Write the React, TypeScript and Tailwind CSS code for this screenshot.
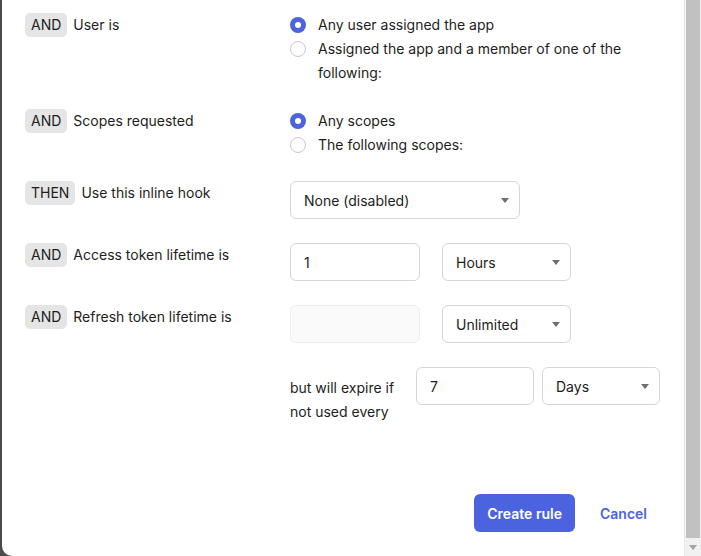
import React from "react";

const font = { fontFamily: "Inter, 'Noto Sans', sans-serif" };

function Badge({ children }: { children: React.ReactNode }) {
  return (
    <span className="inline-flex h-[24px] items-center rounded-[5px] bg-[#e5e5e5] px-[6px] text-[14px] leading-[24px] text-[#1d1d21]">
      {children}
    </span>
  );
}

function RuleLabel({ kind, text }: { kind: string; text: string }) {
  return (
    <div className="flex w-[265px] shrink-0 items-start gap-[6px]">
      <Badge>{kind}</Badge>
      <span className="text-[14px] leading-[24px] text-[#1d1d21]">{text}</span>
    </div>
  );
}

function Radio({ checked, children }: { checked?: boolean; children: React.ReactNode }) {
  return (
    <div className="flex items-start gap-[12px]">
      <span className="flex h-[24px] shrink-0 items-center">
        {checked ? (
          <span className="flex h-[16px] w-[16px] items-center justify-center rounded-full bg-[#4c63e0]">
            <span className="h-[6px] w-[6px] rounded-full bg-white" />
          </span>
        ) : (
          <span className="h-[16px] w-[16px] rounded-full border-[1.5px] border-[#c9c9c9] bg-white" />
        )}
      </span>
      <span className="text-[14px] leading-[24px] text-[#1d1d21]">{children}</span>
    </div>
  );
}

function Caret() {
  return (
    <svg width="8" height="5" viewBox="0 0 8 5" className="shrink-0">
      <path d="M0 0 H8 L4 5 Z" fill="#6e6e78" />
    </svg>
  );
}

function Select({ value, width }: { value: string; width: string }) {
  return (
    <div
      className={`flex h-[38px] ${width} items-center justify-between rounded-[6px] border border-[#d6d6d6] bg-white pl-[13px] pr-[10px] text-[14px] text-[#1d1d21]`}
    >
      <span>{value}</span>
      <Caret />
    </div>
  );
}

function TextInput({ value, width, disabled }: { value?: string; width: string; disabled?: boolean }) {
  return (
    <div
      className={`flex h-[38px] ${width} items-center rounded-[6px] border px-[13px] text-[14px] text-[#1d1d21] ${
        disabled ? "border-[#efefef] bg-[#fafafa]" : "border-[#d6d6d6] bg-white"
      }`}
    >
      {value}
    </div>
  );
}

export default function App() {
  return (
    <div className="flex h-[556px] w-[701px] bg-[#4b4b4b]" style={font}>
      <div className="ml-[2px] flex flex-1 overflow-hidden rounded-bl-[10px] bg-white">
        <div className="flex flex-1 flex-col pl-[23px] pt-[13px]">
          {/* user condition */}
          <div className="flex">
            <RuleLabel kind="AND" text="User is" />
            <div className="flex w-[345px] flex-col">
              <Radio checked>Any user assigned the app</Radio>
              <Radio>Assigned the app and a member of one of the following:</Radio>
            </div>
          </div>

          {/* scopes condition */}
          <div className="mt-[24px] flex">
            <RuleLabel kind="AND" text="Scopes requested" />
            <div className="flex flex-col">
              <Radio checked>Any scopes</Radio>
              <Radio>The following scopes:</Radio>
            </div>
          </div>

          {/* inline hook */}
          <div className="mt-[24px] flex">
            <RuleLabel kind="THEN" text="Use this inline hook" />
            <Select value="None (disabled)" width="w-[230px]" />
          </div>

          {/* access token lifetime */}
          <div className="mt-[24px] flex">
            <RuleLabel kind="AND" text="Access token lifetime is" />
            <div className="flex gap-[22px]">
              <TextInput value="1" width="w-[130px]" />
              <Select value="Hours" width="w-[129px]" />
            </div>
          </div>

          {/* refresh token lifetime */}
          <div className="mt-[24px] flex">
            <RuleLabel kind="AND" text="Refresh token lifetime is" />
            <div className="flex gap-[22px]">
              <TextInput width="w-[130px]" disabled />
              <Select value="Unlimited" width="w-[129px]" />
            </div>
          </div>

          {/* refresh token expiry */}
          <div className="mt-[24px] flex">
            <div className="w-[265px] shrink-0" />
            <div className="flex items-start">
              <div className="w-[126px] pt-[9px] text-[14px] leading-[24px] text-[#1d1d21]">
                but will expire if not used every
              </div>
              <div className="flex gap-[8px]">
                <TextInput value="7" width="w-[118px]" />
                <Select value="Days" width="w-[118px]" />
              </div>
            </div>
          </div>

          {/* actions */}
          <div className="mt-[70px] flex items-center justify-end pr-[37px]">
            <button className="h-[38px] rounded-[6px] bg-[#4c63e0] px-[13px] text-[14px] font-semibold text-white">
              Create rule
            </button>
            <button className="ml-[25px] text-[14px] font-semibold text-[#4c63e0]">Cancel</button>
          </div>
        </div>

        {/* scrollbar */}
        <div className="flex w-[17px] shrink-0 flex-col border-l border-[#e8e8e8] bg-[#f1f1f1]">
          <div className="mx-[1px] h-[538px] bg-[#c1c1c1]" />
          <div className="flex flex-1 items-center justify-center">
            <svg width="8" height="5" viewBox="0 0 8 5">
              <path d="M0 0 H8 L4 5 Z" fill="#a3a3a3" />
            </svg>
          </div>
        </div>
      </div>
    </div>
  );
}
